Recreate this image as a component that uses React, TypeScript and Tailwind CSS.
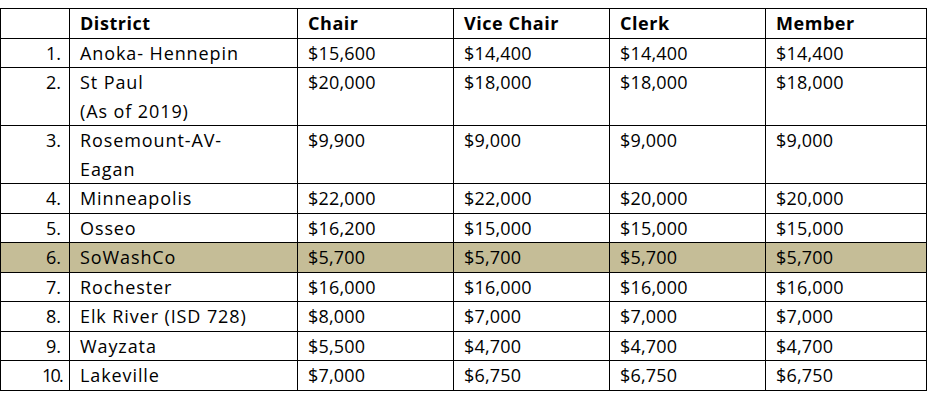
const rows: { n: string; district: string[]; pay: string[]; hi?: boolean }[] = [
  { n: "1.", district: ["Anoka- Hennepin"], pay: ["$15,600", "$14,400", "$14,400", "$14,400"] },
  { n: "2.", district: ["St Paul", "(As of 2019)"], pay: ["$20,000", "$18,000", "$18,000", "$18,000"] },
  { n: "3.", district: ["Rosemount-AV-", "Eagan"], pay: ["$9,900", "$9,000", "$9,000", "$9,000"] },
  { n: "4.", district: ["Minneapolis"], pay: ["$22,000", "$22,000", "$20,000", "$20,000"] },
  { n: "5.", district: ["Osseo"], pay: ["$16,200", "$15,000", "$15,000", "$15,000"] },
  { n: "6.", district: ["SoWashCo"], pay: ["$5,700", "$5,700", "$5,700", "$5,700"], hi: true },
  { n: "7.", district: ["Rochester"], pay: ["$16,000", "$16,000", "$16,000", "$16,000"] },
  { n: "8.", district: ["Elk River (ISD 728)"], pay: ["$8,000", "$7,000", "$7,000", "$7,000"] },
  { n: "9.", district: ["Wayzata"], pay: ["$5,500", "$4,700", "$4,700", "$4,700"] },
  { n: "10.", district: ["Lakeville"], pay: ["$7,000", "$6,750", "$6,750", "$6,750"] },
];

const cell = "border border-black align-top px-[10px] leading-[28.5px] whitespace-nowrap";

export default function App() {
  return (
    <div className="w-[938px] h-[402px] bg-white pt-[8px] font-['Open_Sans',sans-serif] text-[18px] text-black">
      <table className="border-collapse table-fixed w-[926px]">
        <colgroup>
          <col className="w-[69px]" />
          <col className="w-[228px]" />
          <col className="w-[156px]" />
          <col className="w-[156px]" />
          <col className="w-[156px]" />
          <col className="w-[161px]" />
        </colgroup>
        <thead>
          <tr className="font-bold text-left tracking-[0.03em]">
            <th className={cell}></th>
            <th className={cell}>District</th>
            <th className={cell}>Chair</th>
            <th className={cell}>Vice Chair</th>
            <th className={cell}>Clerk</th>
            <th className={cell}>Member</th>
          </tr>
        </thead>
        <tbody>
          {rows.map(r => (
            <tr key={r.n} className={r.hi ? "bg-[#c5bd97]" : ""}>
              <td className={`${cell} pr-0 ${r.n === "10." ? "pl-[41px] tracking-[-0.1em]" : "pl-[45px]"}`}>{r.n}</td>
              <td className={`${cell} tracking-[0.05em]`}>
                {r.district.map(d => <div key={d}>{d}</div>)}
              </td>
              {r.pay.map((p, i) => <td key={i} className={`${cell} tracking-[0.01em]`}>{p}</td>)}
            </tr>
          ))}
        </tbody>
      </table>
    </div>
  );
}
